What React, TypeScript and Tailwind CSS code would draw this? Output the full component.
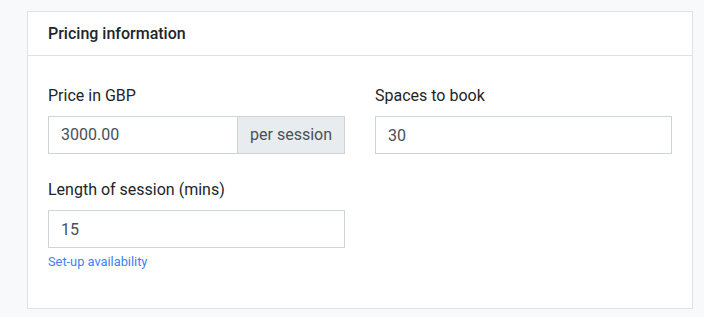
import React from "react";

function Field({ label, children }: { label: string; children: React.ReactNode }) {
  return (
    <div className="flex flex-col">
      <label className="mb-2 text-[16px] leading-6 text-[#212529]">{label}</label>
      {children}
    </div>
  );
}

export default function App() {
  return (
    <div className="min-h-screen w-full bg-[#f8f9fa] pt-[11px] pl-[27px] pr-[11px] font-['Roboto',sans-serif]">
      <div className="w-[666px] border border-[#dee2e6] bg-white">
        <div className="flex h-[44px] items-center border-b border-[#dee2e6] px-5">
          <h2 className="text-[16px] font-medium text-[#212529]">Pricing information</h2>
        </div>
        <div className="grid grid-cols-2 gap-x-[30px] gap-y-6 px-5 pt-7 pb-[38px]">
          <Field label="Price in GBP">
            <div className="flex h-[38px]">
              <input
                type="text"
                defaultValue="3000.00"
                className="min-w-0 flex-1 border border-[#ced4da] px-3 text-[16px] text-[#495057] outline-none"
              />
              <span className="flex items-center border border-l-0 border-[#ced4da] bg-[#e9ecef] px-3 text-[16px] text-[#495057]">
                per session
              </span>
            </div>
          </Field>
          <Field label="Spaces to book">
            <input
              type="text"
              defaultValue="30"
              className="h-[38px] border border-[#ced4da] px-3 text-[16px] text-[#495057] outline-none"
            />
          </Field>
          <Field label="Length of session (mins)">
            <input
              type="text"
              defaultValue="15"
              className="h-[38px] border border-[#ced4da] px-3 text-[16px] text-[#495057] outline-none"
            />
            <a href="#" className="mt-[6px] text-[12.8px] leading-4 text-[#3b82f6]">
              Set-up availability
            </a>
          </Field>
        </div>
      </div>
    </div>
  );
}
